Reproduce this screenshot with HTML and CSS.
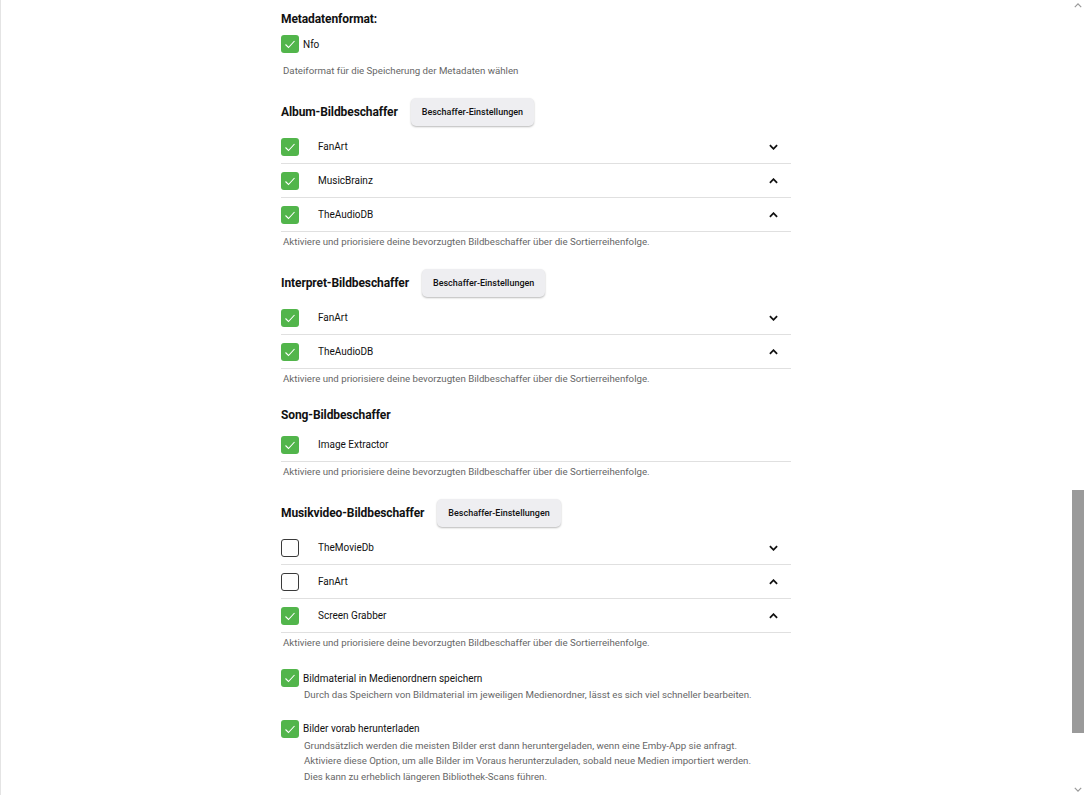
FILE: index.html
```html
<!DOCTYPE html>
<html lang="de">
<head>
  <meta charset="UTF-8">
  <title>Bibliothek-Einstellungen</title>
  <link rel="stylesheet" href="styles.css">
</head>
<body>
  <div class="page">
    <div class="column">

      <div class="section first">
        <div class="section-head"><h2>Metadatenformat:</h2></div>
        <label class="check-line">
          <span class="box checked"><svg viewBox="0 0 18 18"><polyline points="4.5,9.5 7.5,12.5 13.5,6"/></svg></span>
          <span class="check-text">Nfo</span>
        </label>
        <div class="desc spaced">Dateiformat für die Speicherung der Metadaten wählen</div>
      </div>

      <div class="section">
        <div class="section-head with-btn">
          <h2>Album-Bildbeschaffer</h2>
          <button class="btn">Beschaffer-Einstellungen</button>
        </div>
        <div class="row">
          <span class="box checked"><svg viewBox="0 0 18 18"><polyline points="4.5,9.5 7.5,12.5 13.5,6"/></svg></span>
          <span class="row-label">FanArt</span>
          <svg class="chev" viewBox="0 0 10 6"><polyline points="1,1 5,5 9,1"/></svg>
        </div>
        <div class="row">
          <span class="box checked"><svg viewBox="0 0 18 18"><polyline points="4.5,9.5 7.5,12.5 13.5,6"/></svg></span>
          <span class="row-label">MusicBrainz</span>
          <svg class="chev" viewBox="0 0 10 6"><polyline points="1,5 5,1 9,5"/></svg>
        </div>
        <div class="row">
          <span class="box checked"><svg viewBox="0 0 18 18"><polyline points="4.5,9.5 7.5,12.5 13.5,6"/></svg></span>
          <span class="row-label">TheAudioDB</span>
          <svg class="chev" viewBox="0 0 10 6"><polyline points="1,5 5,1 9,5"/></svg>
        </div>
        <div class="desc">Aktiviere und priorisiere deine bevorzugten Bildbeschaffer über die Sortierreihenfolge.</div>
      </div>

      <div class="section">
        <div class="section-head with-btn">
          <h2>Interpret-Bildbeschaffer</h2>
          <button class="btn">Beschaffer-Einstellungen</button>
        </div>
        <div class="row">
          <span class="box checked"><svg viewBox="0 0 18 18"><polyline points="4.5,9.5 7.5,12.5 13.5,6"/></svg></span>
          <span class="row-label">FanArt</span>
          <svg class="chev" viewBox="0 0 10 6"><polyline points="1,1 5,5 9,1"/></svg>
        </div>
        <div class="row">
          <span class="box checked"><svg viewBox="0 0 18 18"><polyline points="4.5,9.5 7.5,12.5 13.5,6"/></svg></span>
          <span class="row-label">TheAudioDB</span>
          <svg class="chev" viewBox="0 0 10 6"><polyline points="1,5 5,1 9,5"/></svg>
        </div>
        <div class="desc">Aktiviere und priorisiere deine bevorzugten Bildbeschaffer über die Sortierreihenfolge.</div>
      </div>

      <div class="section">
        <div class="section-head">
          <h2>Song-Bildbeschaffer</h2>
        </div>
        <div class="row">
          <span class="box checked"><svg viewBox="0 0 18 18"><polyline points="4.5,9.5 7.5,12.5 13.5,6"/></svg></span>
          <span class="row-label">Image Extractor</span>
        </div>
        <div class="desc">Aktiviere und priorisiere deine bevorzugten Bildbeschaffer über die Sortierreihenfolge.</div>
      </div>

      <div class="section">
        <div class="section-head with-btn">
          <h2>Musikvideo-Bildbeschaffer</h2>
          <button class="btn">Beschaffer-Einstellungen</button>
        </div>
        <div class="row">
          <span class="box"></span>
          <span class="row-label">TheMovieDb</span>
          <svg class="chev" viewBox="0 0 10 6"><polyline points="1,1 5,5 9,1"/></svg>
        </div>
        <div class="row">
          <span class="box"></span>
          <span class="row-label">FanArt</span>
          <svg class="chev" viewBox="0 0 10 6"><polyline points="1,5 5,1 9,5"/></svg>
        </div>
        <div class="row">
          <span class="box checked"><svg viewBox="0 0 18 18"><polyline points="4.5,9.5 7.5,12.5 13.5,6"/></svg></span>
          <span class="row-label">Screen Grabber</span>
          <svg class="chev" viewBox="0 0 10 6"><polyline points="1,5 5,1 9,5"/></svg>
        </div>
        <div class="desc">Aktiviere und priorisiere deine bevorzugten Bildbeschaffer über die Sortierreihenfolge.</div>
      </div>

      <div class="option">
        <label class="check-line">
          <span class="box checked"><svg viewBox="0 0 18 18"><polyline points="4.5,9.5 7.5,12.5 13.5,6"/></svg></span>
          <span class="check-text">Bildmaterial in Medienordnern speichern</span>
        </label>
        <div class="option-desc">Durch das Speichern von Bildmaterial im jeweiligen Medienordner, lässt es sich viel schneller bearbeiten.</div>
      </div>

      <div class="option">
        <label class="check-line">
          <span class="box checked"><svg viewBox="0 0 18 18"><polyline points="4.5,9.5 7.5,12.5 13.5,6"/></svg></span>
          <span class="check-text">Bilder vorab herunterladen</span>
        </label>
        <div class="option-desc">Grundsätzlich werden die meisten Bilder erst dann heruntergeladen, wenn eine Emby-App sie anfragt.<br>Aktiviere diese Option, um alle Bilder im Voraus herunterzuladen, sobald neue Medien importiert werden.<br>Dies kann zu erheblich längeren Bibliothek-Scans führen.</div>
      </div>

    </div>
  </div>

  <!-- nachgebildete Scrollleiste -->
  <div class="scrollbar">
    <svg class="scroll-arrow up" viewBox="0 0 10 6"><polyline points="1,5 5,1 9,5"/></svg>
    <div class="scroll-thumb"></div>
    <svg class="scroll-arrow down" viewBox="0 0 10 6"><polyline points="1,1 5,5 9,1"/></svg>
  </div>
</body>
</html>
```

FILE: styles.css
```css
html, body {
  margin: 0;
  padding: 0;
  height: 100%;
  overflow: hidden;
  background: #fff;
}

body {
  font-family: Roboto, "Liberation Sans", sans-serif;
  color: #111;
}

.page {
  margin-right: 13px;
  border-left: 1px solid #e4e4e4;
  min-height: 100%;
  box-sizing: border-box;
}

.column {
  width: 510px;
  margin: 0 auto;
  padding-top: 6px;
}

.section {
  margin-top: 16px;
}

.section.first {
  margin-top: 0;
}

.section-head {
  display: flex;
  align-items: center;
  gap: 13px;
  height: 26px;
}

.section-head.with-btn {
  height: 36px;
}

h2 {
  margin: 0;
  font-size: 12px;
  font-weight: 700;
  letter-spacing: -0.1px;
}

.btn {
  font-family: inherit;
  font-size: 9px;
  font-weight: 500;
  color: #111;
  background: #eeeef1;
  border: none;
  border-radius: 5px;
  height: 28px;
  padding: 0 11px;
  box-shadow: 0 1px 2px rgba(0, 0, 0, 0.28);
}

.box {
  flex: none;
  width: 18px;
  height: 18px;
  box-sizing: border-box;
  border: 1.5px solid #3a3a3a;
  border-radius: 3px;
  display: inline-block;
}

.box.checked {
  background: #52b54b;
  border: none;
}

.box svg {
  display: block;
  width: 18px;
  height: 18px;
  fill: none;
  stroke: #fff;
  stroke-width: 1.1;
}

.row {
  display: flex;
  align-items: center;
  height: 34px;
  box-sizing: border-box;
  border-bottom: 1px solid #e0e0e0;
}

.row-label {
  flex: 1;
  margin-left: 19px;
  font-size: 10px;
}

.chev {
  width: 9px;
  height: 6px;
  margin-right: 13px;
  fill: none;
  stroke: #111;
  stroke-width: 2;
}

.desc {
  font-size: 9.7px;
  color: #666;
  line-height: 14px;
  margin-top: 3px;
  padding-left: 2px;
}

.desc.spaced {
  margin-top: 8px;
}

.check-line {
  display: flex;
  align-items: center;
  height: 24px;
}

.check-text {
  margin-left: 4px;
  font-size: 10px;
}

.option {
  margin-top: 19px;
}

.option .check-line {
  height: 18px;
}

.option + .option {
  margin-top: 17px;
}

.option-desc {
  margin-top: 0;
  padding-left: 23px;
  font-size: 9.7px;
  color: #666;
  line-height: 15.5px;
}

.scrollbar {
  position: fixed;
  top: 0;
  right: 0;
  width: 13px;
  height: 100%;
  background: #fff;
}

.scroll-thumb {
  position: absolute;
  left: 1px;
  top: 490px;
  width: 12px;
  height: 243px;
  background: #9a9a9a;
}

.scroll-arrow {
  position: absolute;
  left: 3px;
  width: 8px;
  height: 5px;
  fill: none;
  stroke: #999;
  stroke-width: 1.5;
}

.scroll-arrow.up {
  top: 3px;
}

.scroll-arrow.down {
  bottom: 3px;
}
```
